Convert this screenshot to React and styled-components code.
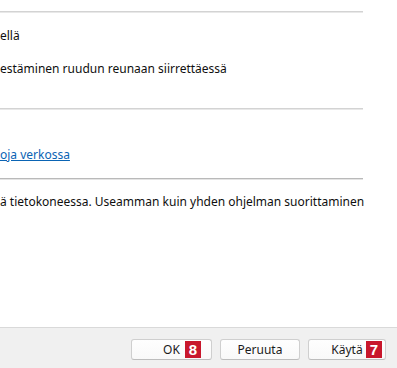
import React from 'react';
import styled, { createGlobalStyle } from 'styled-components';

const Global = createGlobalStyle`
  html, body {
    margin: 0;
    padding: 0;
    background: #ffffff;
    overflow: hidden;
  }
  body {
    font-family: "Noto Sans", "Open Sans", sans-serif;
  }
`;

const Window = styled.div`
  width: 397px;
  height: 368px;
  display: flex;
  flex-direction: column;
  background: #ffffff;
`;

const Content = styled.div`
  flex: 1;
  padding-top: 11px;
  width: 363px;
`;

const Divider = styled.div`
  height: 1px;
  background: ${p => p.$dark ? '#b9b9b9' : '#d3d3d3'};
  box-shadow: 0 1px 0 ${p => p.$dark ? '#e4e4e4' : '#e8e8e8'};
`;

const Line = styled.div`
  font-size: 12px;
  line-height: 16px;
  color: #0f0f0f;
  white-space: nowrap;
  margin-top: ${p => p.$top}px;
`;

const Link = styled.a`
  display: block;
  font-size: 12px;
  line-height: 16px;
  color: #0a64b4;
  text-decoration: underline;
  white-space: nowrap;
  margin-top: ${p => p.$top}px;
  margin-bottom: ${p => p.$bottom}px;
`;

const Spacer = styled.div`
  height: ${p => p.$h}px;
`;

const Footer = styled.div`
  height: 41px;
  box-sizing: border-box;
  background: #f0f0f0;
  border-top: 1px solid #d9d9d9;
  display: flex;
  align-items: center;
  justify-content: flex-end;
  gap: 8px;
  padding: 3px 11px 0 0;
`;

const Button = styled.div`
  position: relative;
  width: ${p => p.$w}px;
  height: 21px;
  box-sizing: border-box;
  border: 1px solid #cfcfcf;
  border-bottom-color: #bdbdbd;
  border-radius: 3px;
  background: linear-gradient(#fefefe, #f9f9f9);
  display: flex;
  align-items: center;
  justify-content: center;
  font-size: 12px;
  color: #1b1b1b;
`;

const Badge = styled.span`
  position: absolute;
  right: ${p => p.$right}px;
  top: 1px;
  width: 16px;
  height: 17px;
  background: #c8172c;
  color: #ffffff;
  font-family: "Liberation Sans", Arial, sans-serif;
  font-weight: bold;
  font-size: 15px;
  line-height: 17px;
  text-align: center;
`;

export default function App() {
  return (
    <Window>
      <Global />
      <Content>
        <Divider />
        <Line $top={16}>ellä</Line>
        <Line $top={17}>estäminen ruudun reunaan siirrettäessä</Line>
        <Spacer $h={31} />
        <Divider />
        <Link $top={38} $bottom={15}>oja verkossa</Link>
        <Divider $dark />
        <Line $top={15}>ä tietokoneessa. Useamman kuin yhden ohjelman suorittaminen</Line>
      </Content>
      <Footer>
        <Button $w={81}>OK<Badge $right={10}>8</Badge></Button>
        <Button $w={80}>Peruuta</Button>
        <Button $w={78}>Käytä<Badge $right={3}>7</Badge></Button>
      </Footer>
    </Window>
  );
}
